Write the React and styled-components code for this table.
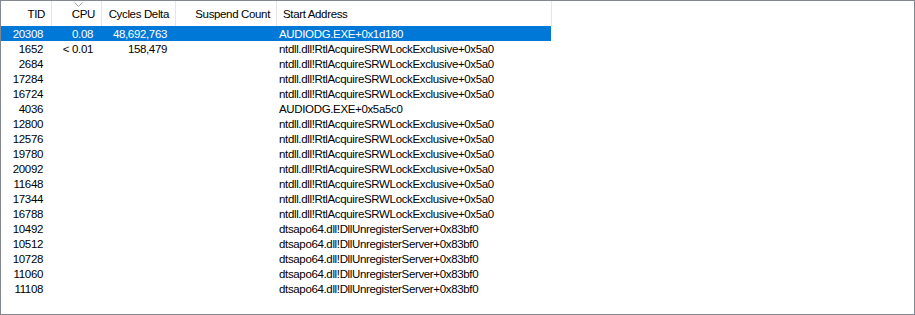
import React from "react";
import styled, { createGlobalStyle } from "styled-components";

const GlobalStyle = createGlobalStyle`
	html, body {
		margin: 0;
		padding: 0;
		background: #fff;
	}
	body {
		font-family: "Liberation Sans", Arial, sans-serif;
		font-size: 11.5px;
		letter-spacing: -0.35px;
	}
`;

const NTDLL = "ntdll.dll!RtlAcquireSRWLockExclusive+0x5a0";
const DTS = "dtsapo64.dll!DllUnregisterServer+0x83bf0";

const threads = [
	{ tid: "20308", cpu: "0.08", cycles: "48,692,763", address: "AUDIODG.EXE+0x1d180", selected: true },
	{ tid: "1652", cpu: "< 0.01", cycles: "158,479", address: NTDLL },
	{ tid: "2684", address: NTDLL },
	{ tid: "17284", address: NTDLL },
	{ tid: "16724", address: NTDLL },
	{ tid: "4036", address: "AUDIODG.EXE+0x5a5c0" },
	{ tid: "12800", address: NTDLL },
	{ tid: "12576", address: NTDLL },
	{ tid: "19780", address: NTDLL },
	{ tid: "20092", address: NTDLL },
	{ tid: "11648", address: NTDLL },
	{ tid: "17344", address: NTDLL },
	{ tid: "16788", address: NTDLL },
	{ tid: "10492", address: DTS },
	{ tid: "10512", address: DTS },
	{ tid: "10728", address: DTS },
	{ tid: "11060", address: DTS },
	{ tid: "11108", address: DTS },
];

const COLUMNS = "51px 50px 74px 101px 275px";

const ThreadList = () => {
	return (
		<Frame>
			<Header>
				<HeadCell>TID</HeadCell>
				<HeadCell>
					<SortArrow width="9" height="5" viewBox="0 0 9 5">
						<path d="M0.5 0.5 L4.5 4.5 L8.5 0.5" fill="none" stroke="#a3a3a3" strokeWidth="1" />
					</SortArrow>
					CPU
				</HeadCell>
				<HeadCell>Cycles Delta</HeadCell>
				<HeadCell>Suspend Count</HeadCell>
				<HeadCell $left>Start Address</HeadCell>
			</Header>

			{threads.map((t) => (
				<Row key={t.tid} $selected={t.selected}>
					<Cell>{t.tid}</Cell>
					<Cell>{t.cpu || ""}</Cell>
					<Cell>{t.cycles || ""}</Cell>
					<Cell></Cell>
					<Cell $left>{t.address}</Cell>
				</Row>
			))}
		</Frame>
	);
};

const Frame = styled.div`
	box-sizing: border-box;
	width: 915px;
	height: 315px;
	border: 1px solid #828790;
	background: #fff;
	overflow: hidden;
	color: #000;
`;

const Header = styled.div`
	display: grid;
	grid-template-columns: ${COLUMNS};
	height: 25px;
	width: 551px;
`;

const HeadCell = styled.div`
	position: relative;
	display: flex;
	align-items: center;
	justify-content: ${(p) => (p.$left ? "flex-start" : "flex-end")};
	padding: ${(p) => (p.$left ? "1px 0 0 6px" : "1px 6px 0 0")};
	border-right: 1px solid #e5e5e5;
	white-space: nowrap;
	color: #000;
`;

const SortArrow = styled.svg`
	position: absolute;
	top: 1px;
	left: 22px;
`;

const Row = styled.div`
	display: grid;
	grid-template-columns: ${COLUMNS};
	width: 550px;
	height: 15px;
	line-height: 16px;
	background: ${(p) => (p.$selected ? "#0078d7" : "transparent")};
	color: ${(p) => (p.$selected ? "#fff" : "#000")};
`;

const Cell = styled.div`
	text-align: ${(p) => (p.$left ? "left" : "right")};
	padding: ${(p) => (p.$left ? "0 0 0 2px" : "0 9px 0 0")};
	white-space: nowrap;
	overflow: hidden;
`;

export default function App() {
	return (
		<>
			<GlobalStyle />
			<ThreadList />
		</>
	);
}
